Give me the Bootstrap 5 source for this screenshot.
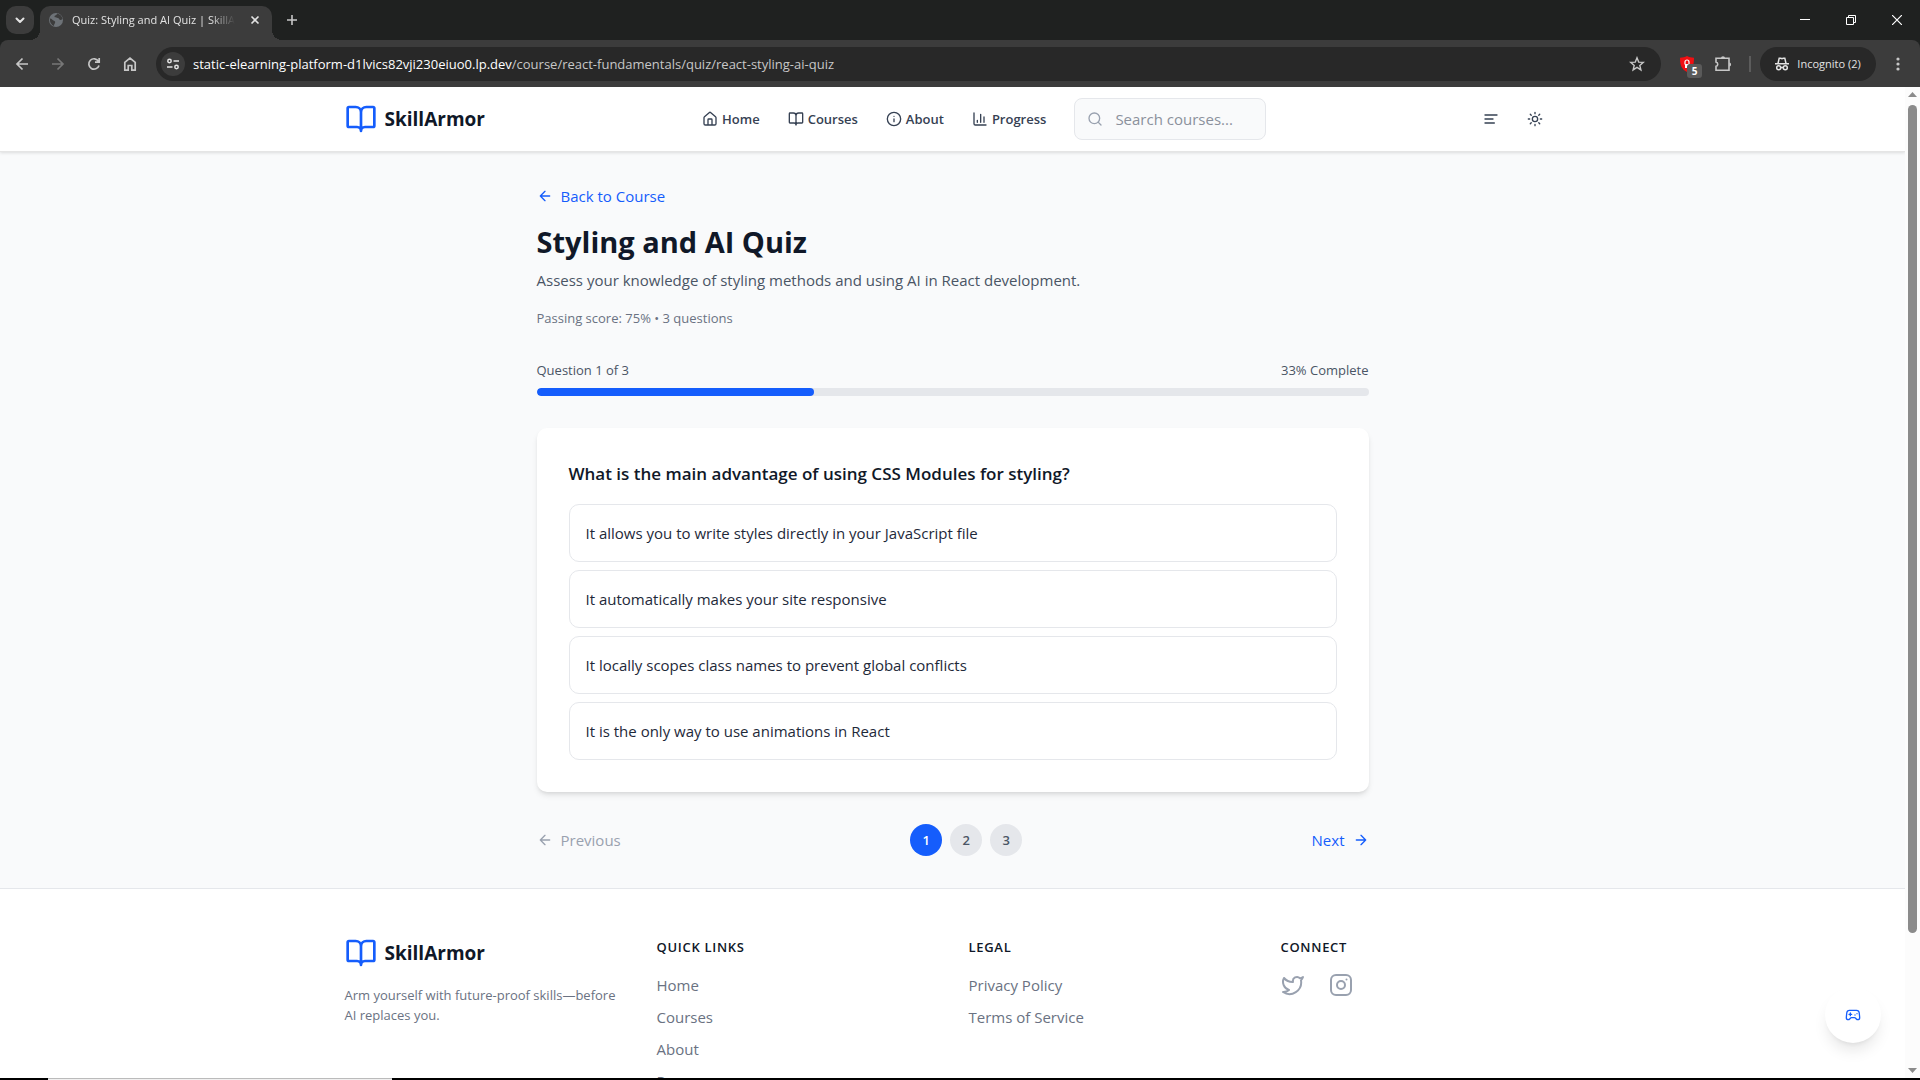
<!DOCTYPE html>
<html lang="en">
<head>
<meta charset="utf-8">
<meta name="viewport" content="width=device-width, initial-scale=1">
<title>Quiz: Styling and AI Quiz | SkillArmor</title>
<link href="https://cdn.jsdelivr.net/npm/bootstrap@5.3.0/dist/css/bootstrap.min.css" rel="stylesheet">
<style>
  :root { --blue: #155dfc; --ink: #101828; --g200: #e5e7eb; --g400: #99a1af; --g500: #6a7282; --g600: #4a5565; }
  body { font-family: "Segoe UI", "Open Sans", "Noto Sans", sans-serif; font-size: 15px; line-height: 24px; color: var(--ink); overflow: hidden; }
  a { text-decoration: none; }
  svg { display: block; flex: none; }
  .ln { fill: none; stroke: currentColor; stroke-width: 2; stroke-linecap: round; stroke-linejoin: round; }
  button { border: 0; background: none; padding: 0; color: inherit; }
  ul { list-style: none; }

  /* browser frame */
  .strip { flex: none; background: #1f2120; height: 40px; padding-left: 6px; color: #e3e3e3; font-size: 11px; }
  .tabsearch { width: 28px; height: 28px; margin-bottom: 6px; border-radius: 10px; background: #3c3c3c; }
  .tab-open { width: 232px; height: 34px; margin: 6px 0 0 6px; padding: 0 8px 6px 8px; background: #3c3c3c; border-radius: 10px 10px 0 0; }
  .tab-open::before, .tab-open::after { content: ""; position: absolute; bottom: 0; width: 10px; height: 10px; }
  .tab-open::before { left: -10px; background: radial-gradient(circle at 0 0, transparent 10px, #3c3c3c 10px); }
  .tab-open::after { right: -10px; background: radial-gradient(circle at 100% 0, transparent 10px, #3c3c3c 10px); }
  .tab-title { -webkit-mask-image: linear-gradient(90deg, #000 85%, transparent); mask-image: linear-gradient(90deg, #000 85%, transparent); }
  .newtab { margin-left: 14px; }
  .winbtn { width: 46px; height: 40px; color: #fff; }
  .toolbar { flex: none; height: 47px; background: #3c3c3c; padding: 0 4px; color: #c7c7c7; }
  .toolwrap { background: #1f2120; }
  .toolwrap .toolbar { border-radius: 8px 8px 0 0; }
  .tool { width: 36px; height: 34px; flex: none; }
  .omni { height: 34px; border-radius: 17px; background: #282828; margin: 0 8px; padding: 0 6px 0 5px; font-size: 13px; color: #c7c7c7; }
  .omni span span { color: #fff; }
  .siteinfo { width: 24px; height: 24px; border-radius: 50%; background: #3c3c3c; }
  .incog { height: 34px; width: 116px; border-radius: 17px; background: #282828; color: #e3e3e3; font-size: 11px; margin: 0 4px 0 9px; }
  .vbar { width: 2px; height: 16px; background: #5c5c5c; margin-left: 8px; }
  .blocked { right: 3px; bottom: 3px; width: 15px; height: 14px; border-radius: 3px; background: #5a5a5a; color: #fff; font-size: 10px; line-height: 14px; font-weight: 700; }

  /* page */
  .viewport { min-height: 0; }
  .page { background: #f9fafb; overflow: hidden; min-width: 0; }
  .wide { max-width: 1280px; padding: 0 32px; }
  .narrow { max-width: 896px; padding: 32px; }
  .topbar { background: #fff; height: 65px; border-bottom: 1px solid #e5e5e5; box-shadow: 0 1px 3px rgba(0,0,0,.12); }
  .brand { color: var(--ink); font-weight: 700; font-size: 19px; line-height: 28px; }
  .brand svg { color: var(--blue); }
  .mainnav { gap: 28px; }
  .navitem { color: #364153; font-size: 13px; font-weight: 600; line-height: 20px; }
  .searchbox { width: 192px; height: 42px; border: 1px solid var(--g200); border-radius: 8px; background: #f9fafb; padding: 0 12px; color: var(--g400); }
  .searchbox input { border: 0; background: none; outline: 0; min-width: 0; width: 100%; padding: 0; }
  .searchbox input::placeholder { color: #8b919c; opacity: 1; }
  .tools { gap: 28px; padding-right: 17px; color: #364153; }
  .bluelink { color: var(--blue); }
  .muted { color: var(--g400); }
  h1 { font-size: 29px; line-height: 36px; font-weight: 700; }
  .note { font-size: 13px; line-height: 20px; color: var(--g500); }
  .desc { color: var(--g600); }
  .progress { height: 8px; --bs-progress-bg: #e5e7eb; --bs-progress-border-radius: 4px; --bs-progress-bar-bg: #155dfc; }
  .progress-bar { border-radius: 4px; }
  .quizcard { background: #fff; border-radius: 10px; margin: 32px 0; padding: 32px; box-shadow: 0 4px 6px -1px rgba(0,0,0,.1), 0 2px 4px -2px rgba(0,0,0,.1); }
  h2 { font-size: 17px; line-height: 28px; font-weight: 600; }
  .answer { border: 1px solid var(--g200); border-radius: 10px; padding: 16px; color: #1e2939; text-align: left; }
  .dot { width: 32px; height: 32px; border-radius: 50%; background: var(--g200); color: var(--g600); font-size: 13px; font-weight: 600; line-height: 20px; }
  .dot.on { background: var(--blue); color: #fff; }
  .foot { background: #fff; border-top: 1px solid var(--g200); padding: 48px 0; }
  .foot .row { --bs-gutter-x: 32px; }
  .foot h3 { font-size: 13px; line-height: 20px; font-weight: 600; letter-spacing: 0.7px; }
  .foot li a { color: var(--g500); }
  .scroller { flex: none; width: 15px; background: #fcfcfc; padding: 5px 0; }
  .thumb { width: 9px; height: 828px; border-radius: 5px; background: #8b8b8b; }
  .fab { right: 39px; bottom: 37px; width: 56px; height: 56px; border-radius: 50%; background: #fff; color: var(--blue); box-shadow: 0 10px 15px -3px rgba(0,0,0,.1), 0 4px 6px -4px rgba(0,0,0,.1); }
  .taskline { flex: none; height: 2px; background: #000; }
  .taskline div { width: 344px; margin-left: 48px; background: #f0f0f0; border-top: 1px solid #bbb; }
</style>
<script src="https://cdn.jsdelivr.net/npm/bootstrap@5.3.0/dist/js/bootstrap.bundle.min.js"></script>
</head>
<body>
<svg class="d-none">
  <symbol id="book" viewBox="0 0 24 24"><path d="M12 7v14M3 18a1 1 0 0 1-1-1V4a1 1 0 0 1 1-1h5a4 4 0 0 1 4 4 4 4 0 0 1 4-4h5a1 1 0 0 1 1 1v13a1 1 0 0 1-1 1h-6a3 3 0 0 0-3 3 3 3 0 0 0-3-3z"/></symbol>
  <symbol id="left" viewBox="0 0 24 24"><path d="m12 19-7-7 7-7M19 12H5"/></symbol>
  <symbol id="right" viewBox="0 0 24 24"><path d="m12 5 7 7-7 7M5 12h14"/></symbol>
</svg>
<div class="d-flex flex-column vh-100">
  <div class="strip d-flex align-items-center">
    <button class="tabsearch d-flex align-items-center justify-content-center align-self-end" aria-label="Search tabs"><svg width="12" height="12" viewBox="0 0 12 12" class="ln"><path d="m2.500 4.500 3.500 3.500 3.500-3.500"/></svg></button>
    <div class="tab-open position-relative d-flex align-items-center align-self-start">
      <svg width="16" height="16" viewBox="0 0 16 16"><circle cx="8" cy="8" r="7" fill="#6d7277"/><path d="M2 6.500c2 0 2 1.500 3.500 2s2 1 1.500 2.500-1 1-1 3C3.500 13 1.500 10 2 6.500zM9 1.500c0 2-2.500 1.500-2.500 3s2 1 3.500 1.500 1 2 2.500 2 1.500-1 2-1C14 4 12 2 9 1.500z" fill="#3c3c3c"/></svg>
      <div class="tab-title text-nowrap ms-2">Quiz: Styling and AI Quiz | SkillA</div>
      <button class="ms-auto p-1" aria-label="Close tab"><svg width="10" height="10" viewBox="0 0 10 10" fill="none" stroke="#e3e3e3" stroke-width="1.600"><path d="m1.500 1.500 7 7m0-7-7 7"/></svg></button>
    </div>
    <button class="newtab" aria-label="New tab"><svg width="12" height="12" viewBox="0 0 12 12" fill="none" stroke="#c7c7c7" stroke-width="1.600"><path d="M6 1v10M1 6h10"/></svg></button>
    <div class="ms-auto d-flex">
      <button class="winbtn d-flex align-items-center justify-content-center" aria-label="Minimize"><svg width="10" height="10"><path d="M0 4h10v1H0z" fill="#fff"/></svg></button>
      <button class="winbtn d-flex align-items-center justify-content-center" aria-label="Restore"><svg width="10" height="10" fill="none" stroke="#fff"><path d="M.5 2.500h7v7h-7zM2.500 2.500v-2h7v7h-2"/></svg></button>
      <button class="winbtn d-flex align-items-center justify-content-center" aria-label="Close"><svg width="10" height="10" fill="none" stroke="#fff" stroke-width="1.200"><path d="m0 0 10 10M10 0 0 10"/></svg></button>
    </div>
  </div>
  <div class="toolwrap">
  <div class="toolbar d-flex align-items-center">
    <button class="tool d-flex align-items-center justify-content-center" aria-label="Back"><svg width="14" height="14" viewBox="0 0 14 14" fill="none" stroke="#c7c7c7" stroke-width="1.700"><path d="M13 7H2m5.500-5.500L2 7l5.500 5.500"/></svg></button>
    <button class="tool d-flex align-items-center justify-content-center" aria-label="Forward"><svg width="14" height="14" viewBox="0 0 14 14" fill="none" stroke="#777" stroke-width="1.700"><path d="M1 7h11M6.500 1.500 12 7l-5.500 5.500"/></svg></button>
    <button class="tool d-flex align-items-center justify-content-center" aria-label="Reload"><svg width="14" height="14" viewBox="0 0 14 14" fill="none" stroke="#c7c7c7" stroke-width="1.700"><path d="M12 8.500A5.200 5.200 0 1 1 11.500 4.300M12.200 1v4.200H8"/></svg></button>
    <button class="tool d-flex align-items-center justify-content-center" aria-label="Home"><svg width="14" height="16" viewBox="0 0 14 16" fill="none" stroke="#c7c7c7" stroke-width="1.700"><path d="M1.800 6.300 7 2.200l5.200 4.100v7.900H8.800V9.500H5.200v4.700H1.800z"/></svg></button>
    <div class="omni flex-fill d-flex align-items-center">
      <button class="siteinfo d-flex align-items-center justify-content-center" aria-label="Site information"><svg width="14" height="12" viewBox="0 0 14 12" fill="none" stroke="#e3e3e3" stroke-width="1.500"><circle cx="3.500" cy="3" r="1.700"/><path d="M7.500 3H13M1 9h5.500"/><circle cx="10.500" cy="9" r="1.700"/></svg></button>
      <span class="ms-2 flex-fill text-nowrap"><span>static-elearning-platform-d1lvics82vji230eiuo0.lp.dev</span>/course/react-fundamentals/quiz/react-styling-ai-quiz</span>
      <button class="tool d-flex align-items-center justify-content-center" aria-label="Bookmark"><svg width="16" height="16" viewBox="0 0 16 16" fill="none" stroke="#c7c7c7" stroke-width="1.400"><path d="m8 1.800 1.700 4.300 4.600.3-3.500 3 1.100 4.500L8 11.400l-3.900 2.500 1.100-4.500-3.500-3 4.600-.3z"/></svg></button>
    </div>
    <button class="tool position-relative d-flex align-items-center justify-content-center" aria-label="Content blocker"><svg width="16" height="16" viewBox="0 0 16 16"><path d="M8 0c2 1.300 4.500 1.700 7 1.700C15 8 14 13 8 16 2 13 1 8 1 1.700 3.500 1.700 6 1.300 8 0z" fill="#f00f12"/><path d="M6 8h4v4H6z" fill="#fff"/><path d="M6 8.500V6a2 2 0 0 1 4 0v2.500" fill="none" stroke="#fff" stroke-width="1.200"/></svg><span class="blocked position-absolute">5</span></button>
    <button class="tool d-flex align-items-center justify-content-center" aria-label="Extensions"><svg width="18" height="18" viewBox="0 0 18 18" fill="none" stroke="#c7c7c7" stroke-width="1.600"><path d="M2 3.300h13v12H2v-4a2.200 2.200 0 0 0 0-4.300z"/><path d="M7 3a2 1.800 0 0 1 4 0zM15.300 7.500a1.800 2 0 0 1 0 4z" fill="#c7c7c7" stroke="none"/></svg></button>
    <div class="vbar"></div>
    <button class="incog d-flex align-items-center justify-content-center gap-2"><svg width="14" height="14" viewBox="0 0 14 14" fill="none" stroke="#e3e3e3" stroke-width="1.500"><path d="M0 6.800h14M3 6.500 4.200 1.200h1.500l1.300.5 1.300-.5h1.500L11 6.500"/><circle cx="3.700" cy="10.800" r="2"/><circle cx="10.300" cy="10.800" r="2"/><path d="M5.700 10.500h2.600"/></svg>Incognito (2)</button>
    <button class="tool d-flex align-items-center justify-content-center" aria-label="Menu"><svg width="4" height="14" fill="#c7c7c7"><circle cx="2" cy="2" r="1.600"/><circle cx="2" cy="7" r="1.600"/><circle cx="2" cy="12" r="1.600"/></svg></button>
  </div>
  </div>

  <div class="viewport flex-fill d-flex">
    <div class="page flex-fill">
      <header class="topbar">
        <div class="wide mx-auto h-100 d-flex align-items-center justify-content-between">
          <a href="#" class="brand d-flex align-items-center gap-2"><svg class="ln" width="32" height="32"><use href="#book"/></svg>SkillArmor</a>
          <nav class="mainnav d-flex align-items-center">
            <a href="#" class="navitem d-flex align-items-center gap-1"><svg class="ln" width="16" height="16" viewBox="0 0 24 24"><path d="M15 21v-8a1 1 0 0 0-1-1h-4a1 1 0 0 0-1 1v8M3 10a2 2 0 0 1 .709-1.528l7-5.999a2 2 0 0 1 2.582 0l7 5.999A2 2 0 0 1 21 10v9a2 2 0 0 1-2 2H5a2 2 0 0 1-2-2z"/></svg>Home</a>
            <a href="#" class="navitem d-flex align-items-center gap-1"><svg class="ln" width="16" height="16"><use href="#book"/></svg>Courses</a>
            <a href="#" class="navitem d-flex align-items-center gap-1"><svg class="ln" width="16" height="16" viewBox="0 0 24 24"><circle cx="12" cy="12" r="10"/><path d="M12 16v-4M12 8h.01"/></svg>About</a>
            <a href="#" class="navitem d-flex align-items-center gap-1"><svg class="ln" width="16" height="16" viewBox="0 0 24 24"><path d="M3 3v16a2 2 0 0 0 2 2h16M18 17V9M13 17V5M8 17v-3"/></svg>Progress</a>
            <label class="searchbox d-flex align-items-center gap-2"><svg class="ln me-1" width="16" height="16" viewBox="0 0 24 24"><circle cx="11" cy="11" r="8"/><path d="m21 21-4.300-4.300"/></svg><input type="search" placeholder="Search courses..." aria-label="Search courses"></label>
          </nav>
          <div class="tools d-flex">
            <button aria-label="Outline"><svg class="ln" width="16" height="16" viewBox="0 0 24 24"><path d="M15 12H3M17 18H3M21 6H3"/></svg></button>
            <button aria-label="Toggle theme"><svg class="ln" width="16" height="16" viewBox="0 0 24 24"><circle cx="12" cy="12" r="4"/><path d="M12 2v2M12 20v2M4.930 4.930l1.410 1.410M17.660 17.660l1.410 1.410M2 12h2M20 12h2M6.340 17.660l-1.410 1.410M19.070 4.930l-1.410 1.410"/></svg></button>
          </div>
        </div>
      </header>

      <main class="narrow mx-auto">
        <a href="#" class="bluelink d-flex align-items-center gap-2 mb-3"><svg class="ln" width="16" height="16"><use href="#left"/></svg>Back to Course</a>
        <h1 class="mb-2">Styling and AI Quiz</h1>
        <p class="desc mb-3">Assess your knowledge of styling methods and using AI in React development.</p>
        <p class="note pb-3 mb-3">Passing score: 75% • 3 questions</p>
        <div class="note desc d-flex justify-content-between mb-2"><span>Question 1 of 3</span><span>33% Complete</span></div>
        <div class="progress" role="progressbar" aria-label="Quiz progress" aria-valuenow="33" aria-valuemin="0" aria-valuemax="100"><div class="progress-bar" style="width: 33.3%"></div></div>
        <section class="quizcard">
          <h2 class="mb-3">What is the main advantage of using CSS Modules for styling?</h2>
          <div class="d-grid gap-2">
            <button class="answer">It allows you to write styles directly in your JavaScript file</button>
            <button class="answer">It automatically makes your site responsive</button>
            <button class="answer">It locally scopes class names to prevent global conflicts</button>
            <button class="answer">It is the only way to use animations in React</button>
          </div>
        </section>
        <div class="d-flex align-items-center justify-content-between">
          <button class="muted d-flex align-items-center gap-2"><svg class="ln" width="16" height="16"><use href="#left"/></svg>Previous</button>
          <div class="d-flex gap-2"><button class="dot on">1</button><button class="dot">2</button><button class="dot">3</button></div>
          <button class="bluelink d-flex align-items-center gap-2">Next<svg class="ln" width="16" height="16"><use href="#right"/></svg></button>
        </div>
      </main>

      <footer class="foot">
        <div class="wide mx-auto">
          <div class="row">
            <div class="col-3">
              <a href="#" class="brand d-flex align-items-center gap-2 mb-3"><svg class="ln" width="32" height="32"><use href="#book"/></svg>SkillArmor</a>
              <p class="note">Arm yourself with future-proof skills—before AI replaces you.</p>
            </div>
            <div class="col-3">
              <h3 class="mb-3">QUICK LINKS</h3>
              <ul class="p-0 d-grid gap-2"><li><a href="#">Home</a></li><li><a href="#">Courses</a></li><li><a href="#">About</a></li><li><a href="#">Progress</a></li></ul>
            </div>
            <div class="col-3">
              <h3 class="mb-3">LEGAL</h3>
              <ul class="p-0 d-grid gap-2"><li><a href="#">Privacy Policy</a></li><li><a href="#">Terms of Service</a></li></ul>
            </div>
            <div class="col-3">
              <h3 class="mb-3">CONNECT</h3>
              <div class="d-flex gap-4">
                <a href="#" class="muted" aria-label="Twitter"><svg class="ln" width="24" height="24" viewBox="0 0 24 24"><path d="M22 4s-.7 2.100-2 3.400c1.600 10-9.400 17.300-18 11.600 2.200.1 4.400-.6 6-2C3 15.500.5 9.600 3 5c2.200 2.600 5.600 4.100 9 4-.9-4.200 4-6.600 7-3.800 1.100 0 3-1.200 3-1.200z"/></svg></a>
                <a href="#" class="muted" aria-label="Instagram"><svg class="ln" width="24" height="24" viewBox="0 0 24 24"><rect width="20" height="20" x="2" y="2" rx="5"/><circle cx="12" cy="12" r="4"/><path d="M17.500 6.500h.01"/></svg></a>
              </div>
            </div>
          </div>
        </div>
      </footer>
    </div>
    <div class="scroller d-flex flex-column align-items-center justify-content-between">
      <div class="d-flex flex-column align-items-center"><svg class="mb-2" width="9" height="5"><path d="M0 5h9L4.500 0z" fill="#8b8b8b"/></svg><div class="thumb"></div></div>
      <svg width="9" height="5"><path d="M0 0h9L4.500 5z" fill="#8b8b8b"/></svg>
    </div>
  </div>
  <div class="taskline d-flex"><div></div></div>
</div>
<button class="fab position-fixed d-flex align-items-center justify-content-center" aria-label="Play games"><svg class="ln" width="16" height="16" viewBox="0 0 24 24"><path d="M6 11h4M8 9v4M15 12h.01M18 10h.01M17.320 5H6.680a4 4 0 0 0-3.978 3.590C2.604 9.416 2 14.456 2 16a3 3 0 0 0 3 3c1 0 1.500-.5 2-1l1.414-1.414A2 2 0 0 1 9.828 16h4.344a2 2 0 0 1 1.414.586L17 18c.5.5 1 1 2 1a3 3 0 0 0 3-3c0-1.545-.604-6.584-.702-7.410A4 4 0 0 0 17.320 5z"/></svg></button>
</body>
</html>
